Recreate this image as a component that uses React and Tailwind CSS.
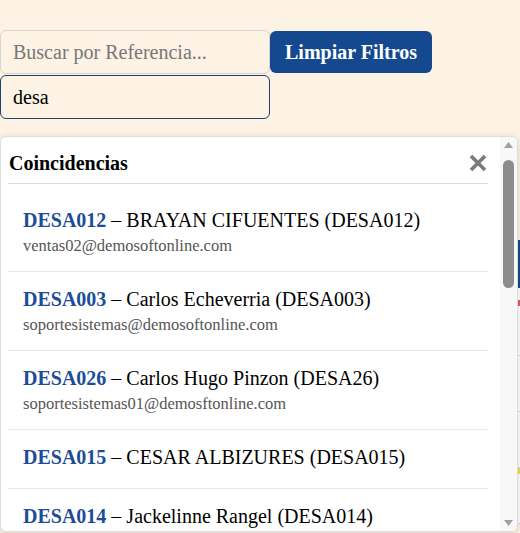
import React from 'react';

const matches = [
  { code: 'DESA012', name: 'BRAYAN CIFUENTES (DESA012)', email: 'ventas02@demosoftonline.com' },
  { code: 'DESA003', name: 'Carlos Echeverria (DESA003)', email: 'soportesistemas@demosoftonline.com' },
  { code: 'DESA026', name: 'Carlos Hugo Pinzon (DESA26)', email: 'soportesistemas01@demosftonline.com' },
  { code: 'DESA015', name: 'CESAR ALBIZURES (DESA015)', email: '' },
  { code: 'DESA014', name: 'Jackelinne Rangel (DESA014)', email: 'ventas01@demosoftonline.com' },
];

const rows = [
  { bar: 'bg-[#e35d5d]' },
  { bar: 'bg-white' },
  { bar: 'bg-white' },
  { bar: 'bg-[#e8e34a]' },
];

// scrollbar drawn by hand, the browser here hides native ones
const FakeScrollbar = () => (
  <div className="flex flex-col items-center w-[17px] shrink-0 bg-[#f8f8f8] py-[4px]">
    <svg width="11" height="8" viewBox="0 0 11 8">
      <path d="M5.5 1 L10 7 L1 7 Z" fill="#a0a0a0" />
    </svg>
    <div className="mt-[11px] w-[11px] h-[128px] rounded-full bg-[#8c8c8c]" />
    <div className="flex-1" />
    <svg width="11" height="8" viewBox="0 0 11 8">
      <path d="M1 1 L10 1 L5.5 7 Z" fill="#a0a0a0" />
    </svg>
  </div>
);

const App = () => {
  return (
    <div className="relative min-h-[533px] bg-[#fdf3e4] font-['Liberation_Serif',serif] text-black overflow-hidden">
      {/* Filters */}
      <div className="flex flex-wrap items-center pt-[30px] w-[520px]">
        <input
          className="w-[270px] h-[44px] px-3 bg-[#fdf3e4] border border-[#d6d3cf] rounded-[6px] text-[20px] placeholder:text-[#777] outline-none"
          placeholder="Buscar por Referencia..."
        />
        <button className="h-[42px] px-[15px] bg-[#15498f] text-white font-bold text-[20px] rounded-[6px]">
          Limpiar Filtros
        </button>
        <input
          className="w-[270px] h-[44px] mt-px px-3 bg-[#fdf3e4] border border-[#1e3f73] rounded-[6px] text-[20px] outline-none"
          defaultValue="desa"
        />
      </div>

      {/* Table behind the dropdown */}
      <div className="mt-[121px] w-[520px]">
        <div className="h-[48px] bg-[#15498f]" />
        <div className="h-[12px] bg-white" />
        {rows.map((r, i) => (
          <div key={i} className="flex flex-col">
            <div className={`h-[6px] ${r.bar}`} />
            <div className="h-[50px] bg-white border-b border-[#ddd]" />
          </div>
        ))}
      </div>

      {/* Matches dropdown */}
      <div className="absolute left-0 top-[136px] w-[518px] h-[396px] flex bg-white border border-[#ddd] rounded-[6px] shadow-[0_2px_8px_rgba(0,0,0,0.15)] overflow-hidden">
        <div className="flex-1 min-w-0 pl-[7px] pr-[12px]">
          <div className="flex items-center justify-between pt-[14px] pb-[8px] border-b border-[#dcdcdc]">
            <span className="pl-px text-[20px] leading-[24px] font-bold">Coincidencias</span>
            <svg width="20" height="20" viewBox="0 0 20 20" className="text-[#7a7a7a]">
              <path d="M3 3 L17 17 M17 3 L3 17" stroke="currentColor" strokeWidth="3.6" />
            </svg>
          </div>
          <ul className="pt-[9px]">
            {matches.map((m) => (
              <li
                key={m.code}
                className={`px-[15px] pt-[16px] border-b border-[#e8e8e8] ${m.email ? 'pb-[15px]' : 'pb-[20px]'}`}
              >
                <div className="text-[20px] leading-[22px] whitespace-nowrap">
                  <span className="font-bold text-[#1d4d97]">{m.code}</span> – {m.name}
                </div>
                {m.email && (
                  <div className="mt-[5px] text-[16.5px] leading-[20px] text-[#555]">{m.email}</div>
                )}
              </li>
            ))}
          </ul>
        </div>
        <FakeScrollbar />
      </div>
    </div>
  );
};

export default App;
